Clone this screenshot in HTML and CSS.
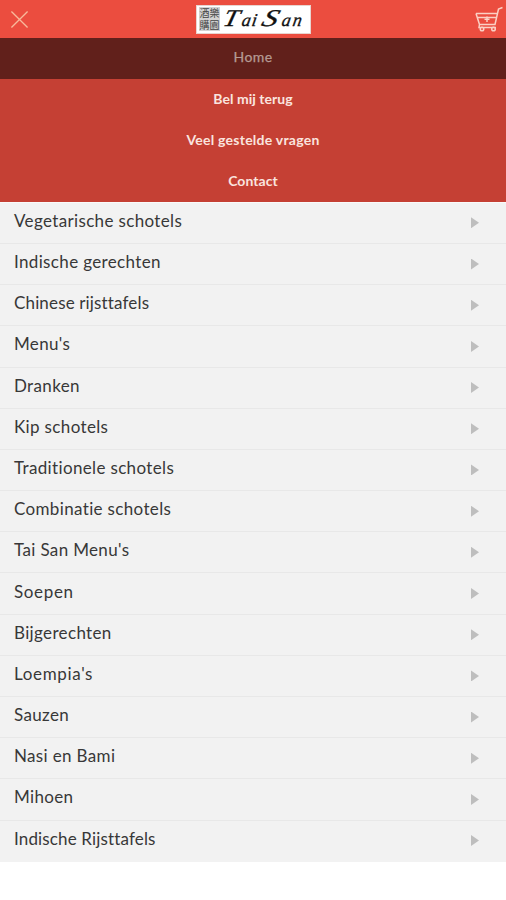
FILE: index.html
```html
<!DOCTYPE html>
<html lang="nl">
<head>
<meta charset="utf-8">
<title>Tai San</title>
<link rel="stylesheet" href="styles.css">
</head>
<body>
<header class="topbar">
  <svg class="close" viewBox="0 0 20 20"><path d="M1.5 1.5 18.5 18.5M18.5 1.5 1.5 18.5"/></svg>
  <div class="logo">
    <div class="seal"><span>酒樂</span><span>購園</span></div>
    <div class="brand"><span class="cap">T</span><span class="low">ai</span><span class="cap second">S</span><span class="low">an</span></div>
  </div>
  <svg class="cart" viewBox="0 0 28 26"><path d="M1 7.5H21.8M1 7.5 4.5 18.5H20L23.5 3 27.5 1.5M2.3 11.5H21.2M4.5 18.5 4 21.5H21"/><path d="M12 10.5v5.5M9.5 13.2h5"/><circle cx="7" cy="23" r="1.8"/><circle cx="18.5" cy="23" r="1.8"/></svg>
</header>
<nav class="menu">
  <a class="item active">Home</a>
  <a class="item">Bel mij terug</a>
  <a class="item wide">Veel gestelde vragen</a>
  <a class="item">Contact</a>
</nav>
<ul class="list">
  <li><span>Vegetarische schotels</span><i></i></li>
  <li><span>Indische gerechten</span><i></i></li>
  <li><span class="tight">Chinese rijsttafels</span><i></i></li>
  <li><span>Menu's</span><i></i></li>
  <li><span>Dranken</span><i></i></li>
  <li><span>Kip schotels</span><i></i></li>
  <li><span>Traditionele schotels</span><i></i></li>
  <li><span>Combinatie schotels</span><i></i></li>
  <li><span>Tai San Menu's</span><i></i></li>
  <li><span class="loose">Soepen</span><i></i></li>
  <li><span>Bijgerechten</span><i></i></li>
  <li><span class="loose">Loempia's</span><i></i></li>
  <li><span>Sauzen</span><i></i></li>
  <li><span>Nasi en Bami</span><i></i></li>
  <li><span>Mihoen</span><i></i></li>
  <li><span class="tight">Indische Rijsttafels</span><i></i></li>
</ul>
</body>
</html>
```

FILE: styles.css
```css
* { box-sizing: border-box; }
body {
  margin: 0;
  background: #fff;
  font-family: Lato, "Liberation Sans", sans-serif;
  color: #383838;
}
.topbar {
  height: 38px;
  padding: 0 3px 0 10px;
  display: grid;
  grid-template-columns: 1fr 115px 1fr;
  align-items: center;
  background: #eb4d3f;
}
.close { width: 19px; height: 19px; fill: none; stroke: #f8b99b; stroke-width: 1.4; }
.cart {
  width: 28px;
  height: 26px;
  justify-self: end;
  fill: none;
  stroke: #fbd0c4;
  stroke-width: 1.5;
}
.logo {
  width: 115px;
  height: 29px;
  margin-left: -3px;
  display: flex;
  align-items: center;
  padding: 0 2px;
  background: #fff;
  border: 1px solid #e8d5d0;
}
.seal {
  width: 21px;
  height: 24px;
  background: #d2d2d2;
  color: #444;
  font: 10px/12px "Noto Sans CJK TC", sans-serif;
  text-align: center;
}
.seal span { display: block; height: 12px; }
.brand {
  margin-left: 5px;
  display: flex;
  align-items: baseline;
  font: italic 18px/26px "Liberation Serif", serif;
  color: #111;
}
.cap { font-size: 24px; transform: skewX(-14deg) scaleX(1.15); -webkit-text-stroke: 0.3px; }
.low { margin-left: 4px; transform: skewX(-10deg); letter-spacing: 1px; -webkit-text-stroke: 0.3px; }
.second { margin-left: 7px; transform: skewX(-20deg) scaleX(1.3); }
.second + .low { margin-left: 5px; letter-spacing: 2px; }
.menu { background: #c54034; }
.item {
  height: 41.2px;
  display: flex;
  align-items: center;
  justify-content: center;
  padding-bottom: 3px;
  font-size: 14px;
  font-weight: 700;
  letter-spacing: 0.05px;
  color: #fae4df;
}
.wide { letter-spacing: 0.25px; }
.active { padding-bottom: 4px; background: #61201b; color: #b59a94; font-weight: 400; letter-spacing: 0.4px; -webkit-text-stroke: 0.25px; }
.list { list-style: none; margin: -1px 0 0; padding: 0; background: #f2f2f2; border-top: 1px solid #fafafa; }
.list li {
  height: 41.2px;
  display: flex;
  align-items: center;
  justify-content: space-between;
  padding: 0 27px 5px 14px;
  border-bottom: 1px solid #e8e8e8;
  font-size: 17px;
  letter-spacing: 0.35px;
}
.list .tight { letter-spacing: 0.15px; }
.list .loose { letter-spacing: 0.65px; }
.list li:last-child { height: 41px; padding-bottom: 6px; border-bottom: 0; }
.list i {
  width: 8px;
  height: 11px;
  margin-top: 5px;
  background: #bebebe;
  clip-path: polygon(0 0, 100% 50%, 0 100%);
}
```
